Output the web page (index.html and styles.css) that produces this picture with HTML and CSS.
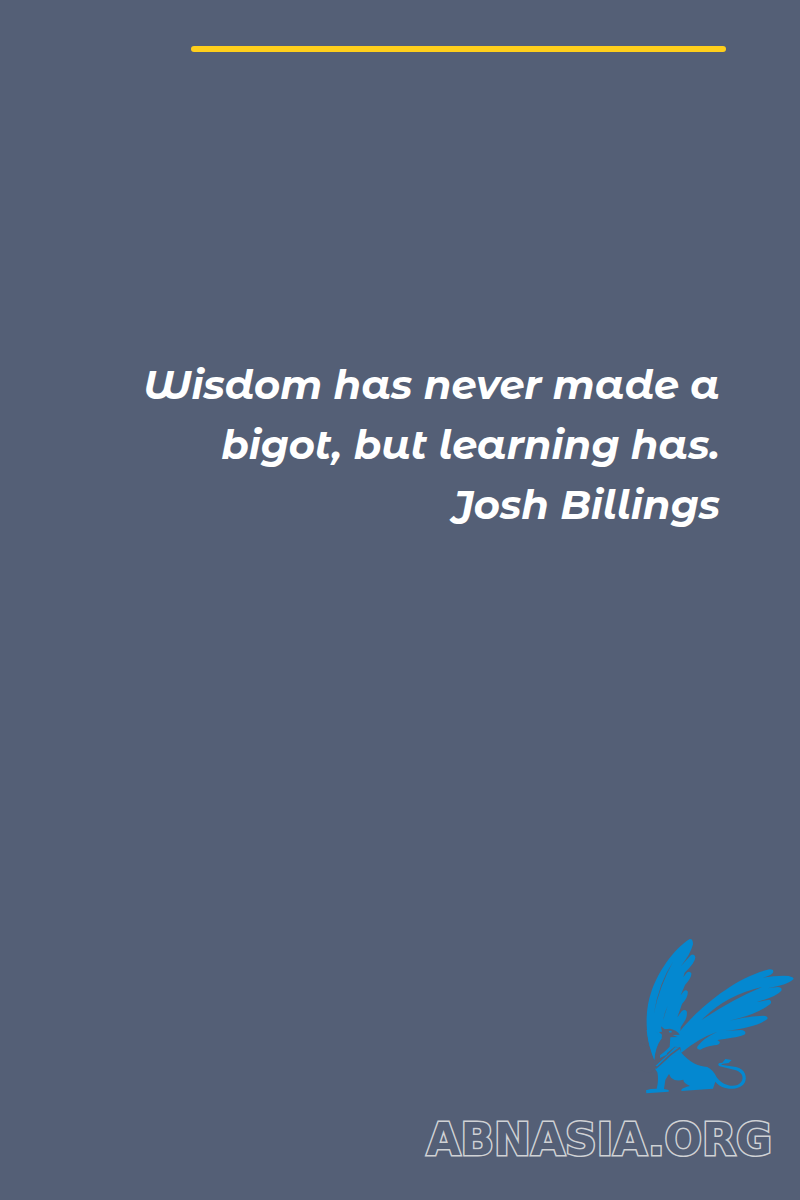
FILE: index.html
```html
<!DOCTYPE html>
<html lang="en">
<head>
<meta charset="utf-8">
<meta name="viewport" content="width=device-width, initial-scale=1">
<title>Wisdom quote</title>
<link rel="stylesheet" href="styles.css">
</head>
<body>
<main class="card">
  <div class="rule"></div>
  <blockquote class="quote">Wisdom has never made a<br>bigot, but learning has.<br>Josh Billings</blockquote>
  <footer class="brand">
    <svg class="griffin" viewBox="0 0 480 510" role="img" aria-label="Griffin">
      <path class="ink" d="M149 27C100 58 54 126 34 185C12 248 16 324 43 391L90 350L120 325L122 292L136 270Q143 254 140 244Q134 236 125 244L112 262L126 222Q146 200 143 184Q138 178 131 184L122 196L135 165Q156 142 154 130Q149 121 140 128L130 142L134 128Q166 98 166 82Q164 70 153 75L123 108Q152 72 159 43Q159 26 149 27Z"/>
      <path class="ink" d="M121 302C180 230 290 140 388 118Q403 117 399 128Q392 138 362 144Q410 136 446 138Q464 143 460 148Q445 164 383 175L413 171Q428 172 424 182Q412 198 352 216L388 209Q397 214 391 222Q350 254 268 272Q320 259 370 257Q386 258 382 267Q350 293 255 303L303 300Q320 302 315 313Q300 322 232 330L240 336Q238 346 223 346Q196 350 181 359Q166 357 174 347Q190 325 232 305Q175 325 127 366L60 412L45 411L40 385L80 330Z"/>
      <path class="ink" d="M122 366C150 398 173 409 202 411Q219 419 230 442C250 470 289 475 303 457C314 442 306 424 282 419L239 409Q231 404 238 399L247 398L256 387L275 390L266 399L249 401L243 404L288 411C315 416 323 443 314 458C297 484 245 481 226 455L219 476L124 483L125 477L140 470L150 468Q130 459 130 449Q107 456 93 443L87 432L76 450L72 477L86 480L86 485L19 490L18 481L32 477L50 476Q57 450 52 427L45 416Z"/>
      <path class="gap" d="M99 95Q56 160 42 249Q58 170 99 95ZM83 228Q72 250 70 270Q76 246 83 228ZM185 270Q256 196 366 171Q272 211 185 270Z"/>
      <path class="gap" d="M63 289L74 298L90 296Q112 300 119 314L97 315L112 321L91 322L89 350L61 377L60 384L78 372L104 350L121 352L123 366L119 357L92 377L63 404L48 417L44 408L42 391C44 370 48 345 65 325L66 314L57 306L66 305Z"/>
      <path class="gap" d="M0 340L30 350L43 391L46 417L30 430L0 420Z"/>
      <path class="ink" d="M20 300L45 300L65 325Q46 350 43 391Q27 352 22 315Z"/>
      <path class="ink" d="M60 376L83 359L80 374L61 383ZM46 408L86 371L105 352L118 352L90 372L52 409Z"/>
      <path class="ink" d="M86 303l8-1 2 5-7 1z"/>
    </svg>
    <div class="wordmark">ABNASIA.ORG</div>
  </footer>
</main>
</body>
</html>
```

FILE: styles.css
```css
* {
  box-sizing: border-box;
}

body {
  margin: 0;
  background: #545f76;
  color: #ffffff;
}

.card {
  display: flex;
  flex-direction: column;
  min-height: 100vh;
  padding-top: 46px;
}

.rule {
  height: 6px;
  margin: 0 74px 0 191px;
  border-radius: 3px;
  background: #ffcf1b;
}

.quote {
  margin: 303px 80px 40px;
  font: italic 700 40px/60px "Montserrat Alternates", Montserrat, Inter, sans-serif;
  text-align: right;
}

.brand {
  display: flex;
  flex-direction: column;
  align-items: flex-end;
  margin-top: auto;
  padding-bottom: 32px;
}

.griffin {
  width: 160px;
  height: 170px;
}

.ink {
  fill: #0488d0;
}

.gap {
  fill: #545f76;
}

.wordmark {
  margin: 12px 28px 0 0;
  color: #545f76;
  font: 700 44px/56px "DejaVu Sans", sans-serif;
  -webkit-text-stroke: 3px #d0d2d5;
  paint-order: stroke fill;
}
```
